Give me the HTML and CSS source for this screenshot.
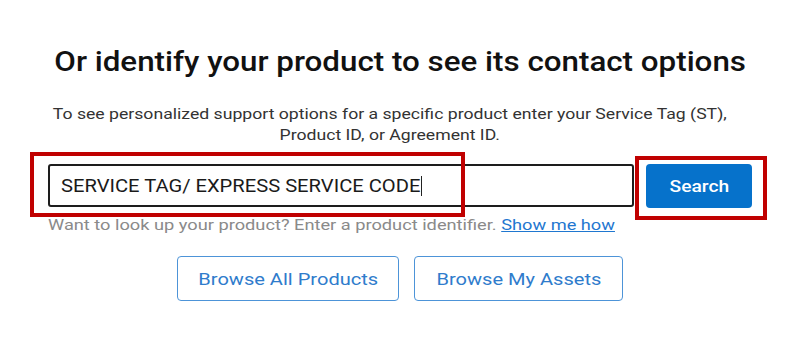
FILE: index.html
```html
<!DOCTYPE html>
<html lang="en">
<head>
<meta charset="utf-8">
<title>Identify your product</title>
<link rel="stylesheet" href="styles.css">
</head>
<body>
<main class="page">
  <h1 class="title"><span class="title-text">Or identify your product to see its contact options</span></h1>
  <p class="lead"><span class="lead-text">To see personalized support options for a specific product enter your Service Tag (ST),<br>Product ID, or Agreement ID.</span></p>
  <div class="search">
    <div class="search-row">
      <div class="field"><span class="field-text">SERVICE TAG/ EXPRESS SERVICE CODE</span><span class="caret"></span></div>
      <button class="btn-primary"><span class="btn-label">Search</span></button>
    </div>
    <p class="hint"><span class="hint-text">Want to look up your product? Enter a product identifier. <a class="hint-link" href="#">Show me how</a></span></p>
  </div>
  <div class="browse">
    <button class="btn-outline btn-products"><span class="outline-label">Browse All Products</span></button>
    <button class="btn-outline btn-assets"><span class="outline-label">Browse My Assets</span></button>
  </div>
  <div class="mark mark-field"></div>
  <div class="mark mark-button"></div>
</main>
</body>
</html>
```
FILE: styles.css
```css
* { box-sizing: border-box; }
html, body { margin: 0; padding: 0; background: #fff; }
body {
  font-family: Roboto, "Noto Sans", Arial, sans-serif;
  color: #0e0e0e;
  width: 800px;
  height: 344px;
  overflow: hidden;
}
.page {
  position: relative;
  height: 344px;
  display: flex;
  flex-direction: column;
  align-items: center;
  padding-top: 45px;
}
.title {
  margin: 0;
  font-size: 27px;
  font-weight: 500;
  line-height: 34px;
  color: #111;
  white-space: nowrap;
}
.title-text { display: inline-block; transform: scaleX(1.16); }
.lead {
  margin: 25px 20px 0 0;
  font-size: 15px;
  line-height: 21px;
  text-align: center;
  color: #333;
  white-space: nowrap;
}
.lead-text { display: inline-block; transform: scaleX(1.175); }
.search {
  width: 704px;
  margin-top: 18px;
}
.search-row {
  display: flex;
  gap: 12px;
  align-items: stretch;
}
.field {
  width: 586px;
  height: 43px;
  border: 2px solid #1d1d1d;
  border-radius: 3px;
  display: flex;
  align-items: center;
  padding-left: 11px;
  font-size: 18px;
  color: #1a1a1a;
}
.field-text { display: inline-block; transform: scaleX(1.12); transform-origin: left center; }
.caret {
  display: inline-block;
  width: 1px;
  height: 20px;
  background: #222;
  margin-left: 39px;
}
.btn-primary {
  width: 106px;
  height: 44px;
  border: none;
  border-radius: 4px;
  background: #0672cb;
  color: #fff;
  font-family: inherit;
  font-size: 17px;
  font-weight: 500;
  padding: 0;
}
.btn-label { display: inline-block; transform: scaleX(1.13); }
.hint {
  margin: 7px 0 0;
  font-size: 15px;
  line-height: 20px;
  color: #8a8a8a;
  white-space: nowrap;
}
.hint-text { display: inline-block; transform: scaleX(1.215); transform-origin: left center; }
.hint-link {
  color: #1f77d0;
  text-decoration: underline;
}
.browse {
  display: flex;
  gap: 15px;
  margin-top: 21px;
}
.btn-outline {
  height: 45px;
  border: 1px solid #4d94d8;
  border-radius: 4px;
  background: #fff;
  color: #2f7ccc;
  font-family: inherit;
  font-size: 17px;
  padding: 0;
}
.outline-label { display: inline-block; transform: scaleX(1.18); }
.btn-products { width: 222px; }
.btn-assets { width: 209px; }
.mark {
  position: absolute;
  border: 4px solid #c00000;
}
.mark-field { left: 30px; top: 152px; width: 435px; height: 65px; }
.mark-button { left: 635px; top: 156px; width: 132px; height: 64px; }
```
